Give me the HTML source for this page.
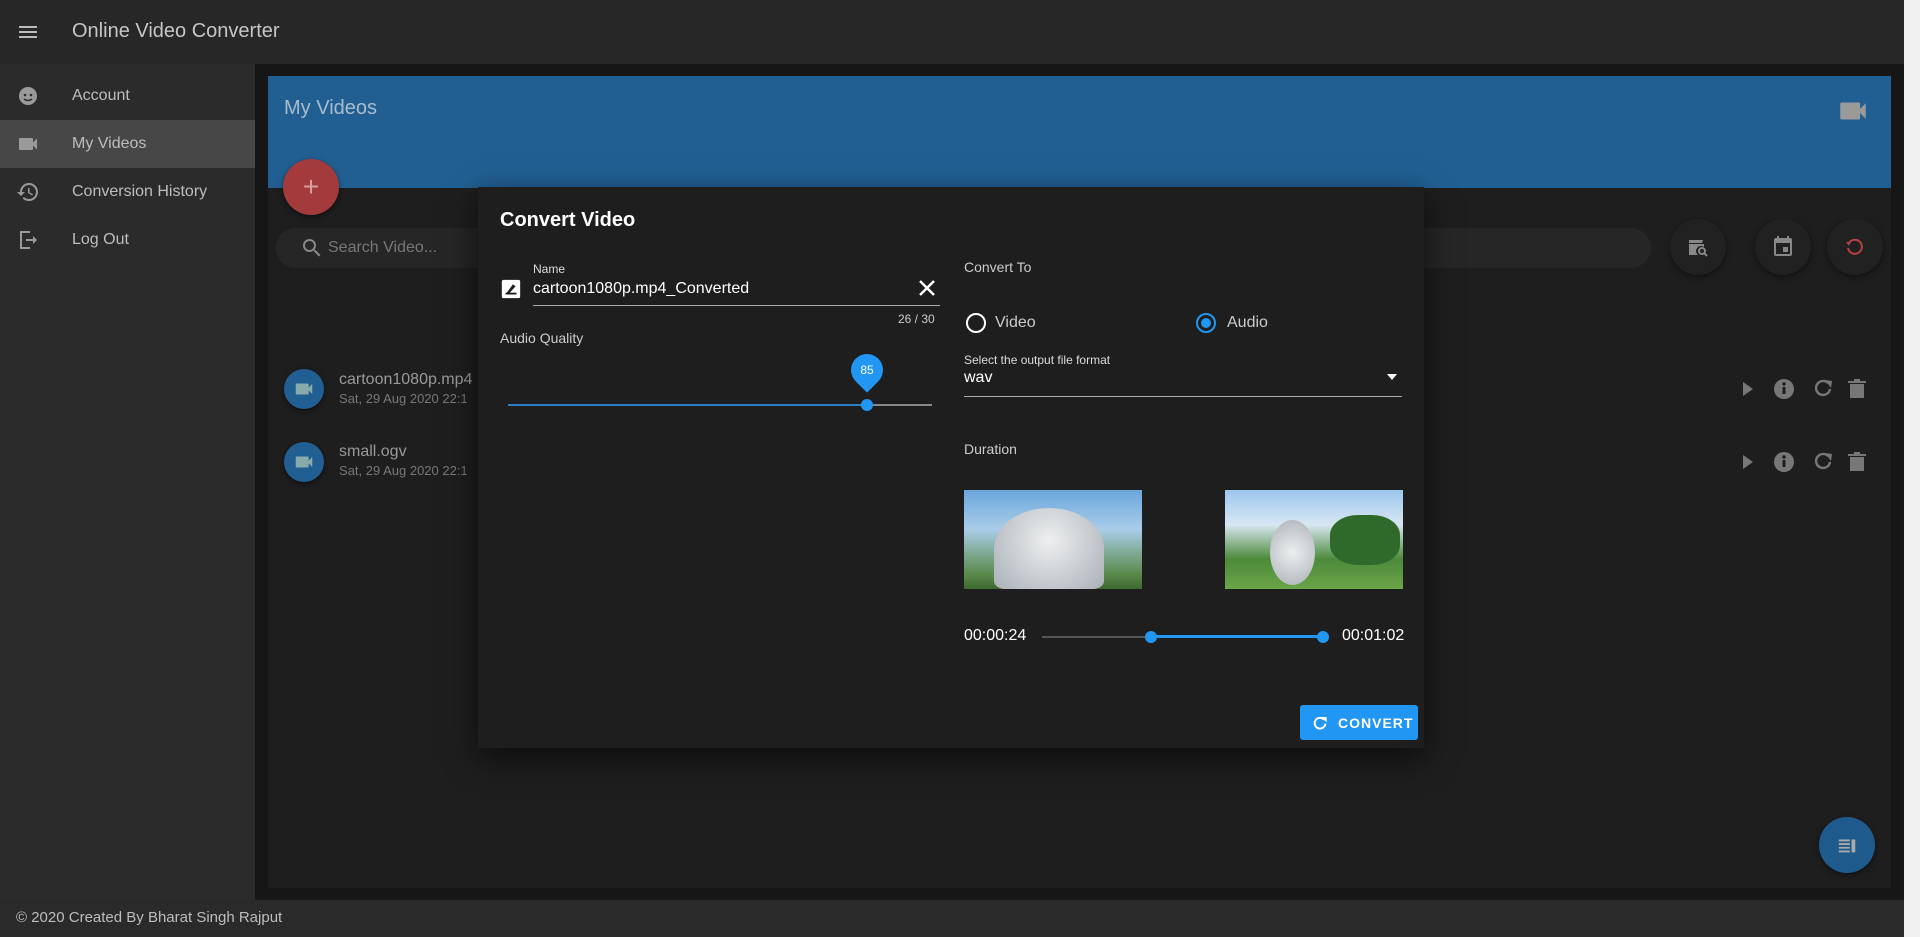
<!DOCTYPE html>
<html><head><meta charset="utf-8"><style>
*{box-sizing:border-box;margin:0;padding:0}
body{width:1920px;height:937px;overflow:hidden;background:#161616;font-family:"Liberation Sans",sans-serif;position:relative;color:#ddd}
.abs{position:absolute}
.hdr{left:0;top:0;width:1904px;height:64px;background:#272727}
.side{left:0;top:64px;width:255px;height:836px;background:#2b2b2b}
.item{position:absolute;left:0;width:255px;height:48px;display:flex;align-items:center;font-size:16px;color:#bdbdbd}
.item span{position:absolute;left:72px}
.item svg{position:absolute;left:16px}
.main{left:268px;top:76px;width:1623px;height:812px;background:#1e1e1e}
.blue{left:268px;top:76px;width:1623px;height:112px;background:#215f93}
.foot{left:0;top:900px;width:1904px;height:37px;background:#2a2a2a;font-size:15px;color:#bdbdbd;padding:9px 16px}
.scroll{left:1904px;top:0;width:16px;height:937px;background:#f0f0f0}
.circ{border-radius:50%;background:#212121;box-shadow:0 2px 6px rgba(0,0,0,.5);display:flex;align-items:center;justify-content:center}
.dlg{left:478px;top:187px;width:946px;height:561px;background:#1e1e1e;box-shadow:0 10px 30px rgba(0,0,0,.6)}
.t{position:absolute;white-space:nowrap}
</style></head><body>
<div class="abs hdr"></div>
<svg class="abs" style="left:16px;top:20px" width="24" height="24" viewBox="0 0 24 24"><path fill="#bbb" d="M3 18h18v-2H3v2zm0-5h18v-2H3v2zm0-7v2h18V6H3z"/></svg>
<div class="t" style="left:72px;top:20px;font-size:20px;color:#c6c6c6">Online Video Converter</div>
<div class="abs side">
 <div class="item" style="top:8px"><svg width="24" height="24" viewBox="0 0 24 24"><circle cx="12" cy="12" r="9" fill="#9a9a9a"/><circle cx="9" cy="11" r="1.3" fill="#2b2b2b"/><circle cx="15" cy="11" r="1.3" fill="#2b2b2b"/><path d="M8 15q4 3 8 0" stroke="#2b2b2b" stroke-width="1.5" fill="none"/></svg><span>Account</span></div>
 <div class="item" style="top:56px;background:#474747"><svg width="24" height="24" viewBox="0 0 24 24"><path fill="#9a9a9a" d="M17 10.5V7c0-.55-.45-1-1-1H4c-.55 0-1 .45-1 1v10c0 .55.45 1 1 1h12c.55 0 1-.45 1-1v-3.5l4 4v-11l-4 4z"/></svg><span>My Videos</span></div>
 <div class="item" style="top:104px"><svg width="24" height="24" viewBox="0 0 24 24"><path fill="#9a9a9a" d="M13 3a9 9 0 0 0-9 9H1l3.89 3.89.07.14L9 12H6c0-3.87 3.13-7 7-7s7 3.13 7 7-3.13 7-7 7c-1.93 0-3.68-.79-4.94-2.06l-1.42 1.42A8.954 8.954 0 0 0 13 21a9 9 0 0 0 0-18zm-1 5v5l4.28 2.54.72-1.21-3.5-2.08V8H12z"/></svg><span>Conversion History</span></div>
 <div class="item" style="top:152px"><svg width="24" height="24" viewBox="0 0 24 24"><path fill="none" stroke="#9a9a9a" stroke-width="2" d="M14 4H5v16h9"/><path fill="#9a9a9a" d="M10 11h7V8l4 4-4 4v-3h-7z"/></svg><span>Log Out</span></div>
</div>
<div class="abs main"></div>
<div class="abs blue"></div>
<div class="t" style="left:284px;top:97px;font-size:20px;color:#a9bccd">My Videos</div>
<svg class="abs" style="left:1836px;top:94px" width="34" height="34" viewBox="0 0 24 24"><path fill="#9a9a9a" d="M17 10.5V7c0-.55-.45-1-1-1H4c-.55 0-1 .45-1 1v10c0 .55.45 1 1 1h12c.55 0 1-.45 1-1v-3.5l4 4v-11l-4 4z"/></svg>
<div class="abs circ" style="left:283px;top:159px;width:56px;height:56px;background:#a33a3c;font-size:28px;color:#d8a0a0">+</div>
<div class="abs" style="left:276px;top:228px;width:1375px;height:40px;border-radius:20px;background:#262626"></div>
<svg class="abs" style="left:300px;top:236px" width="24" height="24" viewBox="0 0 24 24"><path fill="#888" d="M15.5 14h-.79l-.28-.27A6.47 6.47 0 0 0 16 9.5 6.5 6.5 0 1 0 9.5 16c1.61 0 3.09-.59 4.23-1.57l.27.28v.79l5 4.99L20.49 19l-4.99-5zm-6 0C7.01 14 5 11.99 5 9.5S7.01 5 9.5 5 14 7.01 14 9.5 11.99 14 9.5 14z"/></svg>
<div class="t" style="left:328px;top:239px;font-size:16px;color:#777">Search Video...</div>
<div class="abs circ" style="left:1670px;top:219px;width:56px;height:56px"><svg width="24" height="24" viewBox="0 0 24 24"><path fill="#888" d="M3 5h14l-1 3H3zM3 9h15v3a5 5 0 0 0-6 8H3z"/><circle cx="16" cy="16" r="3" fill="none" stroke="#888" stroke-width="2"/><path d="M18 18l3 3" stroke="#888" stroke-width="2"/></svg></div>
<div class="abs circ" style="left:1755px;top:219px;width:56px;height:56px"><svg width="24" height="24" viewBox="0 0 24 24"><path fill="#888" d="M17 12h-5v5h5v-5zM16 1v2H8V1H6v2H5a2 2 0 0 0-2 2v14a2 2 0 0 0 2 2h14a2 2 0 0 0 2-2V5a2 2 0 0 0-2-2h-1V1h-2zm3 18H5V8h14v11z"/></svg></div>
<div class="abs circ" style="left:1827px;top:219px;width:56px;height:56px"><svg width="24" height="24" viewBox="0 0 24 24"><path fill="none" stroke="#b84040" stroke-width="2" d="M6 8a7 7 0 1 1-1 5"/><path fill="#b84040" d="M3 7l5 0-2 4z"/></svg></div>
<div class="abs circ" style="left:284px;top:369px;width:40px;height:40px;background:#215f93"><svg width="22" height="22" viewBox="0 0 24 24"><path fill="#8aa" d="M17 10.5V7c0-.55-.45-1-1-1H4c-.55 0-1 .45-1 1v10c0 .55.45 1 1 1h12c.55 0 1-.45 1-1v-3.5l4 4v-11l-4 4z"/></svg></div>
<div class="t" style="left:339px;top:371px;font-size:16px;color:#999">cartoon1080p.mp4</div>
<div class="t" style="left:339px;top:391px;font-size:13px;color:#777">Sat, 29 Aug 2020 22:1</div>
<div class="abs circ" style="left:284px;top:442px;width:40px;height:40px;background:#215f93"><svg width="22" height="22" viewBox="0 0 24 24"><path fill="#8aa" d="M17 10.5V7c0-.55-.45-1-1-1H4c-.55 0-1 .45-1 1v10c0 .55.45 1 1 1h12c.55 0 1-.45 1-1v-3.5l4 4v-11l-4 4z"/></svg></div>
<div class="t" style="left:339px;top:443px;font-size:16px;color:#999">small.ogv</div>
<div class="t" style="left:339px;top:463px;font-size:13px;color:#777">Sat, 29 Aug 2020 22:1</div>
<div class="abs" style="left:1737px;top:377px">
<svg width="140" height="24" viewBox="0 0 140 24"><path fill="#777" d="M6 5l10 7-10 7z"/><circle cx="47" cy="12" r="10" fill="#777"/><rect x="45.5" y="10" width="3" height="7" fill="#1e1e1e"/><circle cx="47" cy="7" r="1.7" fill="#1e1e1e"/><path d="M91 6a7 7 0 1 0 2 6" fill="none" stroke="#777" stroke-width="2.4"/><path fill="#777" d="M88 3l7 1-1 7z"/><path fill="#777" d="M113 7h14v14h-14zM111 4h18v2h-18zM117 2h6v2h-6z"/></svg></div>
<div class="abs" style="left:1737px;top:450px">
<svg width="140" height="24" viewBox="0 0 140 24"><path fill="#777" d="M6 5l10 7-10 7z"/><circle cx="47" cy="12" r="10" fill="#777"/><rect x="45.5" y="10" width="3" height="7" fill="#1e1e1e"/><circle cx="47" cy="7" r="1.7" fill="#1e1e1e"/><path d="M91 6a7 7 0 1 0 2 6" fill="none" stroke="#777" stroke-width="2.4"/><path fill="#777" d="M88 3l7 1-1 7z"/><path fill="#777" d="M113 7h14v14h-14zM111 4h18v2h-18zM117 2h6v2h-6z"/></svg></div>
<div class="abs circ" style="left:1819px;top:817px;width:56px;height:56px;background:#1f5a8d"><svg width="22" height="22" viewBox="0 0 24 24"><path fill="#aaa" d="M3 6h12v2H3zM3 10h12v2H3zM3 14h12v2H3zM3 18h12v2H3zM17 6h4v14h-4z"/></svg></div>
<div class="abs foot">© 2020 Created By Bharat Singh Rajput</div>
<div class="abs scroll"></div>

<div class="abs dlg">
 <div class="t" style="left:22px;top:22px;font-size:20px;font-weight:bold;color:#fff">Convert Video</div>
 <div class="t" style="left:55px;top:75px;font-size:12px;color:#ddd">Name</div>
 <svg class="abs" style="left:22px;top:91px" width="22" height="22" viewBox="0 0 24 24"><rect x="2" y="2" width="20" height="20" rx="2" fill="#fff"/><path d="M6 18l8-11 3 2-8 9z" fill="#1e1e1e"/><rect x="6" y="16" width="12" height="2" fill="#1e1e1e"/></svg>
 <div class="t" style="left:55px;top:93px;font-size:16px;color:#fff">cartoon1080p.mp4_Converted</div>
 <svg class="abs" style="left:440px;top:92px" width="18" height="18" viewBox="0 0 18 18"><path d="M2 2l14 14M16 2L2 16" stroke="#fff" stroke-width="2.4"/></svg>
 <div class="abs" style="left:55px;top:118px;width:407px;height:1px;background:#aaa"></div>
 <div class="t" style="left:420px;top:125px;font-size:12px;color:#ccc">26 / 30</div>
 <div class="t" style="left:22px;top:143px;font-size:14px;color:#ccc">Audio Quality</div>
 <div class="abs" style="left:30px;top:217px;width:359px;height:2px;background:#2b7fc8"></div>
 <div class="abs" style="left:389px;top:217px;width:65px;height:2px;background:#888"></div>
 <div class="abs" style="left:383px;top:212px;width:12px;height:12px;border-radius:50%;background:#2196f3"></div>
 <div class="abs" style="left:373px;top:167px;width:32px;height:32px;border-radius:50% 50% 50% 0;transform:rotate(-45deg);background:#2196f3"></div>
 <div class="t" style="left:373px;top:176px;width:32px;text-align:center;font-size:12px;color:#fff">85</div>

 <div class="t" style="left:486px;top:72px;font-size:14px;color:#ccc">Convert To</div>
 <div class="abs" style="left:488px;top:126px;width:20px;height:20px;border-radius:50%;border:2px solid #fff"></div>
 <div class="t" style="left:517px;top:127px;font-size:16px;color:#ccc">Video</div>
 <div class="abs" style="left:718px;top:126px;width:20px;height:20px;border-radius:50%;border:2px solid #2196f3"></div>
 <div class="abs" style="left:723px;top:131px;width:10px;height:10px;border-radius:50%;background:#2196f3"></div>
 <div class="t" style="left:749px;top:127px;font-size:16px;color:#ccc">Audio</div>
 <div class="t" style="left:486px;top:166px;font-size:12px;color:#ddd">Select the output file format</div>
 <div class="t" style="left:486px;top:182px;font-size:16px;color:#fff">wav</div>
 <svg class="abs" style="left:908px;top:186px" width="12" height="8"><path d="M1 1h10L6 7z" fill="#fff"/></svg>
 <div class="abs" style="left:486px;top:209px;width:438px;height:1px;background:#aaa"></div>
 <div class="t" style="left:486px;top:254px;font-size:14px;color:#ccc">Duration</div>
 <div class="abs" style="left:486px;top:303px;width:178px;height:99px;background:linear-gradient(180deg,#6aa6dc 0%,#a9cde8 40%,#5a8a4a 85%,#3d6a30 100%)"><div style="position:absolute;left:30px;top:18px;width:110px;height:81px;border-radius:50% 50% 10% 10%;background:radial-gradient(circle at 50% 40%,#eef0f0,#aab0b8)"></div></div>
 <div class="abs" style="left:747px;top:303px;width:178px;height:99px;background:linear-gradient(180deg,#9cc7ee 0%,#d8e6f2 35%,#4d8a3a 70%,#6aa548 100%)"><div style="position:absolute;left:45px;top:30px;width:45px;height:65px;border-radius:50%;background:radial-gradient(circle,#eceff0,#aab0b6)"></div><div style="position:absolute;left:105px;top:25px;width:70px;height:50px;border-radius:40%;background:#2f6a2a"></div></div>
 <div class="t" style="left:486px;top:440px;font-size:16px;color:#fff">00:00:24</div>
 <div class="t" style="left:864px;top:440px;font-size:16px;color:#fff">00:01:02</div>
 <div class="abs" style="left:564px;top:449px;width:281px;height:2px;background:#555"></div>
 <div class="abs" style="left:673px;top:448px;width:172px;height:3px;background:#2196f3"></div>
 <div class="abs" style="left:667px;top:444px;width:12px;height:12px;border-radius:50%;background:#2196f3"></div>
 <div class="abs" style="left:839px;top:444px;width:12px;height:12px;border-radius:50%;background:#2196f3"></div>
 <div class="abs" style="left:822px;top:518px;width:118px;height:35px;background:#2196f3;border-radius:3px;color:#fff;font-size:14px;font-weight:bold;letter-spacing:1px;padding:10px 0 0 38px">CONVERT</div>
 <svg class="abs" style="left:834px;top:528px" width="16" height="16" viewBox="0 0 24 24"><path d="M18 7a8 8 0 1 0 2 6" fill="none" stroke="#fff" stroke-width="3"/><path fill="#fff" d="M14 3h8v8z"/></svg>
</div>
</body></html>
